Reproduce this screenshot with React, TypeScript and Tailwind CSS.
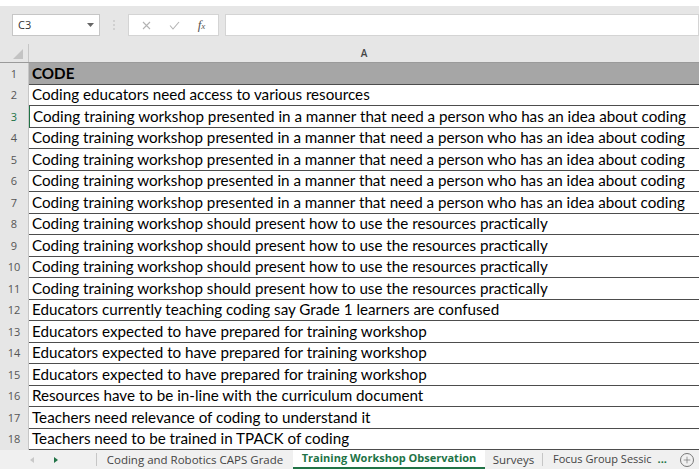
import { Plus } from "lucide-react";

const rows: string[] = [
  "Coding educators need access to various resources",
  "Coding training workshop presented in a manner that need a person who has an idea about coding",
  "Coding training workshop presented in a manner that need a person who has an idea about coding",
  "Coding training workshop presented in a manner that need a person who has an idea about coding",
  "Coding training workshop presented in a manner that need a person who has an idea about coding",
  "Coding training workshop presented in a manner that need a person who has an idea about coding",
  "Coding training workshop should present how to use the resources practically",
  "Coding training workshop should present how to use the resources practically",
  "Coding training workshop should present how to use the resources practically",
  "Coding training workshop should present how to use the resources practically",
  "Educators currently teaching coding say Grade 1 learners are confused",
  "Educators expected to have prepared for training workshop",
  "Educators expected to have prepared for training workshop",
  "Educators expected to have prepared for training workshop",
  "Resources have to be in-line with the curriculum document",
  "Teachers need relevance of coding to understand it",
  "Teachers need to be trained in TPACK of coding",
];

const uiFont = { fontFamily: "'Open Sans', 'Noto Sans', sans-serif" };
const cellFont = { fontFamily: "Lato, 'Noto Sans', sans-serif" };

function FormulaBar() {
  return (
    <div className="h-[38px] bg-[#e6e6e6] flex items-center pl-[12px]" style={uiFont}>
      <div className="w-[88px] h-[22px] bg-white border border-[#c6c6c6] flex items-center justify-between pl-[5px] pr-[5px]">
        <span className="text-[11px] text-[#333]">C3</span>
        <svg width="7" height="4" viewBox="0 0 7 4">
          <path d="M0 0h7L3.5 4z" fill="#666" />
        </svg>
      </div>
      <div className="w-[28px] flex justify-center">
        <svg width="2" height="10" viewBox="0 0 2 10">
          <circle cx="1" cy="1" r="0.8" fill="#b5b5b5" />
          <circle cx="1" cy="5" r="0.8" fill="#b5b5b5" />
          <circle cx="1" cy="9" r="0.8" fill="#b5b5b5" />
        </svg>
      </div>
      <div className="w-[91px] h-[22px] bg-white border border-[#d4d4d4] flex items-center">
        <div className="w-[34px] flex justify-center">
          <svg width="9" height="9" viewBox="0 0 9 9">
            <path d="M1 1l7 7M8 1l-7 7" stroke="#b3b3b3" strokeWidth="1.1" />
          </svg>
        </div>
        <div className="w-[22px] flex justify-center">
          <svg width="11" height="9" viewBox="0 0 11 9">
            <path d="M1 4.5l3 3.5 6-7" stroke="#b3b3b3" strokeWidth="1.1" fill="none" />
          </svg>
        </div>
        <div className="flex-1 flex justify-center">
          <span className="text-[13px] italic text-[#555]" style={{ fontFamily: "'Liberation Serif', serif" }}>
            f<span className="text-[9px]">x</span>
          </span>
        </div>
      </div>
      <div className="flex-1 h-[22px] bg-white border border-[#d4d4d4] ml-[6px]" />
    </div>
  );
}

function ColumnHeader() {
  return (
    <div className="h-[19px] flex bg-[#e6e6e6] border-b border-[#9a9a9a]">
      <div className="w-[29px] flex items-end justify-end pr-[5px] pb-[3px] border-r border-[#c6c6c6]">
        <svg width="10" height="10" viewBox="0 0 10 10">
          <path d="M10 0v10H0z" fill="#c3c3c3" />
        </svg>
      </div>
      <div className="flex-1 flex items-end justify-center pb-[1px] text-[10px] font-semibold text-[#444]" style={uiFont}>
        A
      </div>
    </div>
  );
}

function Row({ num, text, header, active }: { num: number; text: string; header?: boolean; active?: boolean }) {
  return (
    <div className="h-[21.5px] flex">
      <div
        className={`w-[29px] shrink-0 bg-[#e6e6e6] border-r border-[#c6c6c6] flex items-center justify-center text-[11px] ${
          active ? "text-[#217346]" : "text-[#555]"
        }`}
        style={uiFont}
      >
        {num}
      </div>
      <div
        className={`flex-1 flex items-center pl-[3px] text-[15.2px] text-black border-b border-[#4d4d4d] whitespace-nowrap overflow-hidden ${
          header ? "bg-[#a6a6a6] font-bold" : "bg-white"
        } ${active ? "border-l border-l-[#217346] pl-[2px]" : ""}`}
        style={cellFont}
      >
        {text}
      </div>
    </div>
  );
}

function SheetTabs() {
  return (
    <div className="h-[19px] bg-[#f0f0f0] flex items-stretch text-[11.5px] text-[#444] whitespace-nowrap" style={uiFont}>
      <div className="w-[96px] flex items-center">
        <svg className="ml-[30px]" width="4" height="6" viewBox="0 0 4 6">
          <path d="M4 0v6L0 3z" fill="#c8c8c8" />
        </svg>
        <svg className="ml-[20px]" width="4" height="6" viewBox="0 0 4 6">
          <path d="M0 0v6l4-3z" fill="#217346" />
        </svg>
      </div>
      <div className="w-px my-[3px] bg-[#c6c6c6]" />
      <div className="w-[196px] flex items-center justify-center">Coding and Robotics CAPS Grade</div>
      <div className="w-[192px] bg-white flex items-center justify-center font-bold text-[11px] text-[#217346] border-b-2 border-[#217346]">
        Training Workshop Observation
      </div>
      <div className="w-[57px] flex items-center justify-center">Surveys</div>
      <div className="w-px my-[3px] bg-[#c6c6c6]" />
      <div className="w-[132px] flex items-center pl-[10px] text-[11px]">
        Focus Group Sessic
        <span className="ml-[6px] font-bold text-[#217346]">...</span>
      </div>
      <div className="flex-1 flex items-center justify-center">
        <div className="w-[14px] h-[14px] rounded-full border border-[#777] flex items-center justify-center">
          <Plus size={10} strokeWidth={1.5} color="#666" />
        </div>
      </div>
    </div>
  );
}

export default function App() {
  return (
    <div className="w-[699px] h-[470px] bg-white flex flex-col overflow-hidden">
      <div className="h-[6px] bg-white" />
      <FormulaBar />
      <ColumnHeader />
      <div className="flex flex-col">
        <Row num={1} text="CODE" header />
        {rows.map((r, i) => (
          <Row key={i} num={i + 2} text={r} active={i + 2 === 3} />
        ))}
      </div>
      <SheetTabs />
    </div>
  );
}
